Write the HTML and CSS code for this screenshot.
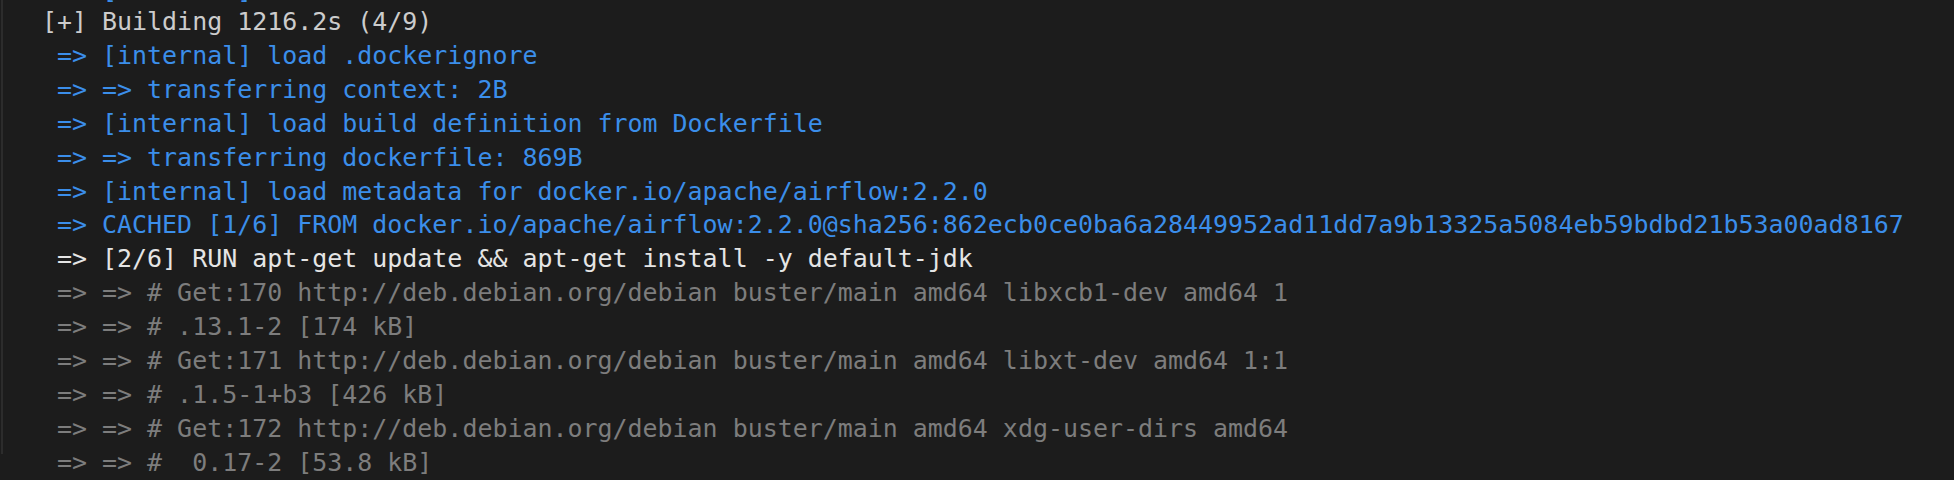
FILE: index.html
```html
<!DOCTYPE html>
<html>
<head>
<meta charset="utf-8">
<link rel="stylesheet" href="styles.css">
</head>
<body>
<div class="terminal">
  <div class="output">
    <div class="line blue cut"> => [internal] load build definition from Dockerfile</div>
    <div class="line white">[+] Building 1216.2s (4/9)</div>
    <div class="line blue"> => [internal] load .dockerignore</div>
    <div class="line blue"> => =&gt; transferring context: 2B</div>
    <div class="line blue"> => [internal] load build definition from Dockerfile</div>
    <div class="line blue"> => =&gt; transferring dockerfile: 869B</div>
    <div class="line blue"> => [internal] load metadata for docker.io/apache/airflow:2.2.0</div>
    <div class="line blue"> => CACHED [1/6] FROM docker.io/apache/airflow:2.2.0@sha256:862ecb0ce0ba6a28449952ad11dd7a9b13325a5084eb59bdbd21b53a00ad8167</div>
    <div class="line bright"> => [2/6] RUN apt-get update &amp;&amp; apt-get install -y default-jdk</div>
    <div class="line grey"> => =&gt; # Get:170 http://deb.debian.org/debian buster/main amd64 libxcb1-dev amd64 1</div>
    <div class="line grey"> => =&gt; # .13.1-2 [174 kB]</div>
    <div class="line grey"> => =&gt; # Get:171 http://deb.debian.org/debian buster/main amd64 libxt-dev amd64 1:1</div>
    <div class="line grey"> => =&gt; # .1.5-1+b3 [426 kB]</div>
    <div class="line grey"> => =&gt; # Get:172 http://deb.debian.org/debian buster/main amd64 xdg-user-dirs amd64</div>
    <div class="line grey"> => =&gt; #  0.17-2 [53.8 kB]</div>
  </div>
</div>
</body>
</html>
```

FILE: styles.css
```css
html, body {
  margin: 0;
  padding: 0;
  background: #1c1c1c;
  height: 100%;
  overflow: hidden;
}

.terminal {
  margin-left: 1px;
  border-left: 2px solid #2c2c2c;
  height: 100%;
  box-sizing: border-box;
  padding-left: 39px;
}

.output {
  font-family: "DejaVu Sans Mono", "Liberation Mono", monospace;
  font-size: 24.94px;
  line-height: 33.93px;
  margin-top: -26px;
}

.line {
  white-space: pre;
  height: 33.93px;
}

.line.cut {
  height: 30.93px;
}

.white { color: #cccccc; }
.bright { color: #e5e5e5; }
.blue { color: #3b8eea; }
.grey { color: #7d7d7d; }
```
